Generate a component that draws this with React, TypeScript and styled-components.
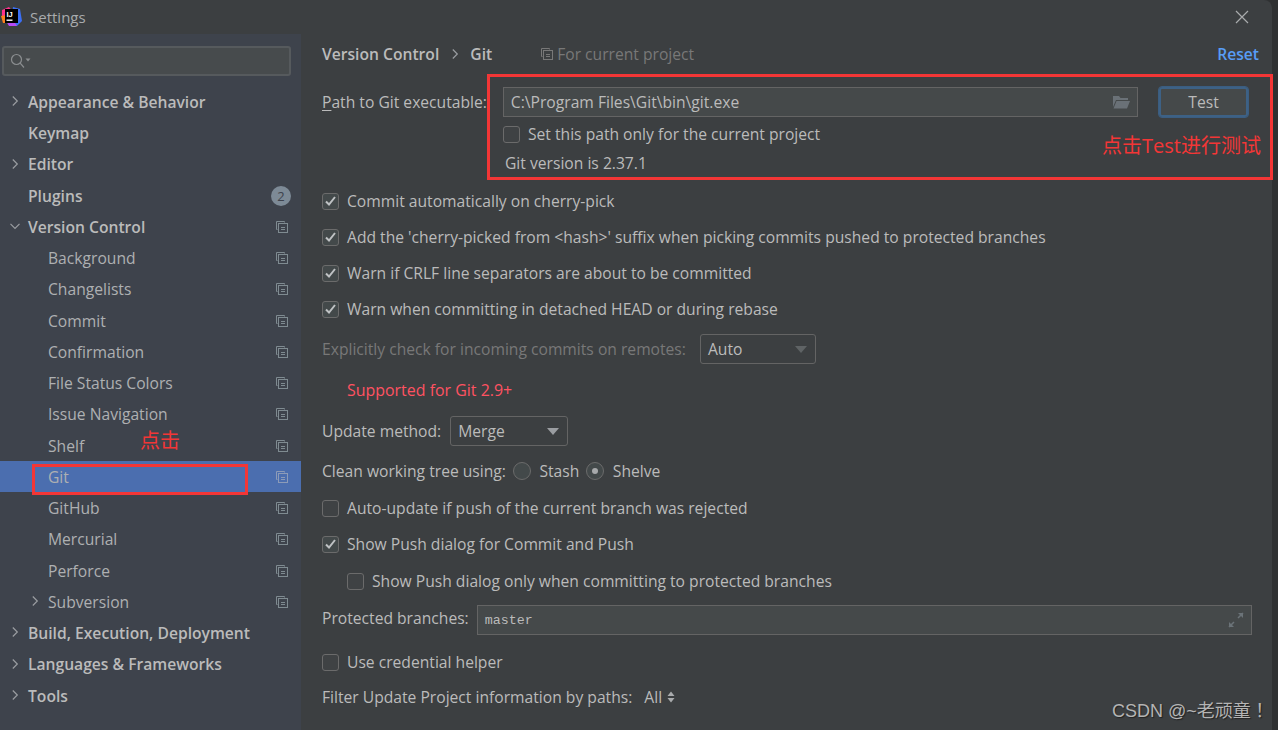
import React from "react";
import styled, { createGlobalStyle } from "styled-components";

const GlobalStyle = createGlobalStyle`
  html, body {
    margin: 0;
    padding: 0;
    background: #2f3132;
  }
  body {
    font-family: "Open Sans", "Noto Sans", "Liberation Sans", sans-serif;
    font-size: 15.65px;
    color: #bbbbbb;
    overflow: hidden;
  }
`;

//DATA
type NavItem = {
  label: string;
  level: 0 | 1;
  arrow?: "right" | "down";
  project?: boolean;
  badge?: string;
  active?: boolean;
};

const navItems: NavItem[] = [
  { label: "Appearance & Behavior", level: 0, arrow: "right" },
  { label: "Keymap", level: 0 },
  { label: "Editor", level: 0, arrow: "right" },
  { label: "Plugins", level: 0, badge: "2" },
  { label: "Version Control", level: 0, arrow: "down", project: true },
  { label: "Background", level: 1, project: true },
  { label: "Changelists", level: 1, project: true },
  { label: "Commit", level: 1, project: true },
  { label: "Confirmation", level: 1, project: true },
  { label: "File Status Colors", level: 1, project: true },
  { label: "Issue Navigation", level: 1, project: true },
  { label: "Shelf", level: 1, project: true },
  { label: "Git", level: 1, project: true, active: true },
  { label: "GitHub", level: 1, project: true },
  { label: "Mercurial", level: 1, project: true },
  { label: "Perforce", level: 1, project: true },
  { label: "Subversion", level: 1, arrow: "right", project: true },
  { label: "Build, Execution, Deployment", level: 0, arrow: "right" },
  { label: "Languages & Frameworks", level: 0, arrow: "right" },
  { label: "Tools", level: 0, arrow: "right" },
];

//ICONS
const Logo = () => (
  <svg width="22" height="22" viewBox="0 0 22 22">
    <polygon points="1,4 8,1 12,6 5,12 1,10" fill="#ff318c" />
    <polygon points="0,10 5,9 6,17 2,17" fill="#fc801d" />
    <polygon points="12,1 19,3 21,15 16,20 10,18" fill="#3b6ff5" />
    <polygon points="5,15 8,20 16,20 12,14" fill="#b74af7" />
    <rect x="4" y="3" width="13" height="14" fill="#000" />
    <rect x="5.5" y="13.5" width="6" height="1.4" fill="#fff" />
    <text x="5.5" y="10.5" fontSize="7.5" fontWeight="700" fill="#fff" fontFamily="Liberation Sans, sans-serif">
      IJ
    </text>
  </svg>
);

const Chevron = ({ down }: { down?: boolean }) => (
  <svg width="12" height="12" viewBox="0 0 12 12" fill="none" stroke="#9a9da1" strokeWidth="1.2">
    {down ? <path d="M1.5 3.8 6 8.3 10.5 3.8" /> : <path d="M3.8 1.5 8.3 6 3.8 10.5" />}
  </svg>
);

const ProjectIcon = ({ color = "#7f8b91" }: { color?: string }) => (
  <svg width="12" height="12" viewBox="0 0 12 12" fill="none" stroke={color} strokeWidth="1">
    <path d="M8.5 1.5V.5H.5v8h1" />
    <rect x="2.5" y="2.5" width="9" height="9" />
    <path d="M5 6.5h4M5 8.5h4" />
  </svg>
);

const SearchIcon = () => (
  <svg width="22" height="16" viewBox="0 0 22 16" fill="none" stroke="#8b8e90" strokeWidth="1.2">
    <circle cx="6.5" cy="6.5" r="5" />
    <path d="M10.2 10.2 14 14.5" />
    <path d="M15.5 5.5h5l-2.5 3z" fill="#8b8e90" stroke="none" />
  </svg>
);

const FolderIcon = () => (
  <svg width="18" height="14" viewBox="0 0 18 14">
    <path d="M1 1h6l1.5 2H16v2H4L1 12z" fill="#6a7177" />
    <path d="M4.5 6H18l-3 7.5H1.5z" fill="#6a7177" />
  </svg>
);

const ExpandIcon = () => (
  <svg width="16" height="16" viewBox="0 0 16 16" fill="none" stroke="#6b7378" strokeWidth="1.5">
    <path d="M10 6l5-5M1 15l5-5" />
    <path d="M10 1h5v5z" fill="#6b7378" stroke="none" />
    <path d="M1 10v5h5z" fill="#6b7378" stroke="none" />
  </svg>
);

const CheckMark = () => (
  <svg width="11" height="10" viewBox="0 0 11 10" fill="none" stroke="#bfc2c4" strokeWidth="2">
    <path d="M1 5.5 4 8.5 10 1" />
  </svg>
);

const UpDown = () => (
  <svg width="8" height="12" viewBox="0 0 8 12" fill="#a9abad">
    <path d="M4 .5 7.5 5h-7zM4 11.5.5 7h7z" />
  </svg>
);

//LAYOUT
const Frame = styled.div`
  position: relative;
  width: 1278px;
  height: 730px;
  overflow: hidden;
  background: #2f3132;
`;

const Window = styled.div`
  width: 1272px;
  height: 730px;
  background: #3c3f41;
  border-top-right-radius: 8px;
  display: flex;
  flex-direction: column;
`;

const TitleBar = styled.div`
  height: 34px;
  flex: none;
  display: flex;
  align-items: center;
  padding: 0 23px 0 1px;
  gap: 7px;
  color: #a9abad;
  font-size: 15px;
`;

const Title = styled.span`
  flex: 1;
`;

const Close = styled.svg`
  width: 14px;
  height: 14px;
  stroke: #a9abad;
  stroke-width: 1.2;
  fill: none;
`;

const Body = styled.div`
  flex: 1;
  display: flex;
  min-height: 0;
`;

const Sidebar = styled.aside`
  width: 301px;
  flex: none;
  background: #3e434c;
  padding-top: 12px;
  box-sizing: border-box;
`;

const SearchBox = styled.div`
  height: 30px;
  margin: 0 10px 0 2px;
  box-sizing: border-box;
  border: 2px solid #565a5d;
  border-radius: 3px;
  background: #474b4d;
  display: flex;
  align-items: center;
  padding-left: 6px;
`;

const NavList = styled.div`
  margin-top: 10.2px;
  display: grid;
  grid-auto-rows: 31.26px;
`;

const NavRow = styled.div<{ $level: number; $active?: boolean }>`
  position: relative;
  display: flex;
  align-items: center;
  padding-left: ${(p) => (p.$level === 1 ? 48 : 28)}px;
  padding-right: 13px;
  background: ${(p) => (p.$active ? "#4b6eaf" : "transparent")};
  color: ${(p) => (p.$level === 0 ? "#bbbbbb" : "#aeb0b2")};
  font-weight: ${(p) => (p.$level === 0 ? 600 : 400)};
`;

const NavArrow = styled.span<{ $level: number }>`
  position: absolute;
  left: ${(p) => (p.$level === 1 ? 29 : 9)}px;
  top: 9px;
  display: flex;
`;

const NavLabel = styled.span`
  flex: 1;
`;

const Badge = styled.span`
  width: 20px;
  height: 20px;
  margin-right: -3px;
  border-radius: 50%;
  background: #7d8a96;
  color: #3e434c;
  font-size: 13px;
  font-weight: 400;
  display: flex;
  align-items: center;
  justify-content: center;
`;

const Content = styled.main`
  flex: 1;
  min-width: 0;
  padding-left: 21px;
  padding-right: 20px;
`;

const Row = styled.div<{ $h: number; $mt?: number; $indent?: number; $gap?: number }>`
  height: ${(p) => p.$h}px;
  margin-top: ${(p) => p.$mt ?? 0}px;
  padding-left: ${(p) => p.$indent ?? 0}px;
  display: flex;
  align-items: center;
  gap: ${(p) => p.$gap ?? 8}px;
  white-space: nowrap;
`;

const Crumb = styled.span`
  font-weight: 600;
  color: #bbbbbb;
`;

const CrumbSep = styled.span`
  margin: 0 9px 0 10px;
  display: flex;
`;

const Scope = styled.span`
  margin-left: 49px;
  display: flex;
  align-items: center;
  gap: 4px;
  color: #787878;
  flex: 1;
`;

const Reset = styled.span`
  font-weight: 600;
  color: #589df6;
  margin-right: -7px;
`;

const Label = styled.span`
  color: #bbbbbb;
  u {
    text-underline-offset: 2px;
  }
`;

const Muted = styled.span`
  color: #787878;
`;

const Warn = styled.span`
  color: #ff5261;
  font-size: 15.95px;
`;

const TextInput = styled.div<{ $mono?: boolean }>`
  height: 30px;
  box-sizing: border-box;
  flex: 1;
  display: flex;
  align-items: center;
  justify-content: space-between;
  padding: 0 7px 0 7px;
  margin-top: ${(p) => (p.$mono ? 4 : 0)}px;
  background: #45494a;
  border: 1px solid #646464;
  color: #bbbbbb;
  font-family: ${(p) => (p.$mono ? '"Liberation Mono", monospace' : "inherit")};
  font-size: ${(p) => (p.$mono ? "13.3px" : "inherit")};
`;

const TestButton = styled.button`
  width: 91px;
  height: 32px;
  margin-left: 4px;
  margin-right: 3px;
  box-sizing: border-box;
  background: #45494a;
  border: 1px solid #3b5d80;
  border-radius: 4px;
  box-shadow: inset 0 0 0 2px #3d6185;
  color: #bbbbbb;
  font: inherit;
`;

const Box = styled.span<{ $checked?: boolean }>`
  width: 17px;
  height: 17px;
  flex: none;
  box-sizing: border-box;
  border: 1px solid #6b6b6b;
  border-radius: 3px;
  background: ${(p) => (p.$checked ? "#43494a" : "#3f4244")};
  display: flex;
  align-items: center;
  justify-content: center;
`;

const Radio = styled.span<{ $on?: boolean }>`
  width: 18px;
  height: 18px;
  flex: none;
  margin-right: 1.5px;
  box-sizing: border-box;
  border: 1px solid #6b6b6b;
  border-radius: 50%;
  background: #43494a;
  display: flex;
  align-items: center;
  justify-content: center;
  &::after {
    content: "";
    width: 6px;
    height: 6px;
    border-radius: 50%;
    background: ${(p) => (p.$on ? "#a7a9ab" : "transparent")};
  }
`;

const Select = styled.div<{ $w: number; $dim?: boolean }>`
  width: ${(p) => p.$w}px;
  height: 30px;
  box-sizing: border-box;
  border: 1px solid #646464;
  border-radius: 3px;
  padding: 0 8px 0 7px;
  display: flex;
  align-items: center;
  justify-content: space-between;
  color: #bbbbbb;
  &::after {
    content: "";
    border-left: 6px solid transparent;
    border-right: 6px solid transparent;
    border-top: 7px solid ${(p) => (p.$dim ? "#5f6365" : "#9a9da1")};
  }
`;

const VersionText = styled.span`
  margin-left: 183px;
`;

const SubOption = styled.span`
  margin-left: 181px;
  display: flex;
  align-items: center;
  gap: 8px;
`;

const FilterValue = styled.span`
  display: flex;
  align-items: center;
  gap: 5px;
  color: #bbbbbb;
`;

//ANNOTATIONS
const RedBox = styled.div<{ $x: number; $y: number; $w: number; $h: number }>`
  position: absolute;
  left: ${(p) => p.$x}px;
  top: ${(p) => p.$y}px;
  width: ${(p) => p.$w}px;
  height: ${(p) => p.$h}px;
  box-sizing: border-box;
  border: 3px solid #f33636;
`;

const Note = styled.span<{ $x: number; $y: number }>`
  position: absolute;
  left: ${(p) => p.$x}px;
  top: ${(p) => p.$y}px;
  color: #f33636;
  font-family: "Open Sans", "Noto Sans CJK SC", sans-serif;
  font-size: 20px;
  line-height: 28px;
  white-space: nowrap;
`;

const Watermark = styled.span`
  position: absolute;
  left: 1112px;
  top: 699px;
  font-family: "Liberation Sans", "Noto Sans CJK TC", sans-serif;
  font-size: 18px;
  line-height: 24px;
  color: #b4b4b4;
  text-shadow: 1px 1px 1px #222;
  white-space: nowrap;
`;

const CheckRow = ({
  h,
  mt,
  indent,
  checked,
  children,
}: {
  h: number;
  mt?: number;
  indent?: number;
  checked?: boolean;
  children: React.ReactNode;
}) => (
  <Row $h={h} $mt={mt} $indent={indent}>
    <Box $checked={checked}>{checked && <CheckMark />}</Box>
    <Label>{children}</Label>
  </Row>
);

const App: React.FC = () => {
  return (
    <Frame>
      <GlobalStyle />
      <Window>
        <TitleBar>
          <Logo />
          <Title>Settings</Title>
          <Close viewBox="0 0 14 14">
            <path d="M1 1l12 12M13 1 1 13" />
          </Close>
        </TitleBar>
        <Body>
          <Sidebar>
            <SearchBox>
              <SearchIcon />
            </SearchBox>
            <NavList>
              {navItems.map((item) => (
                <NavRow key={item.label} $level={item.level} $active={item.active}>
                  {item.arrow && (
                    <NavArrow $level={item.level}>
                      <Chevron down={item.arrow === "down"} />
                    </NavArrow>
                  )}
                  <NavLabel>{item.label}</NavLabel>
                  {item.project && <ProjectIcon color={item.active ? "#8c9bb8" : "#7f8b91"} />}
                  {item.badge && <Badge>{item.badge}</Badge>}
                </NavRow>
              ))}
            </NavList>
          </Sidebar>
          <Content>
            <Row $h={40} $gap={0}>
              <Crumb>Version Control</Crumb>
              <CrumbSep>
                <Chevron />
              </CrumbSep>
              <Crumb>Git</Crumb>
              <Scope>
                <ProjectIcon color="#787878" />
                For current project
              </Scope>
              <Reset>Reset</Reset>
            </Row>
            <Row $h={36} $mt={10} $gap={16}>
              <Label>
                <u>P</u>ath to Git executable:
              </Label>
              <TextInput>
                C:\Program Files\Git\bin\git.exe
                <FolderIcon />
              </TextInput>
              <TestButton>Test</TestButton>
            </Row>
            <Row $h={28}>
              <SubOption>
                <Box />
                <Label>Set this path only for the current project</Label>
              </SubOption>
            </Row>
            <Row $h={30}>
              <VersionText>Git version is 2.37.1</VersionText>
            </Row>
            <CheckRow h={36} mt={5} checked>
              Commit automatically on cherry-pick
            </CheckRow>
            <CheckRow h={36} checked>
              Add the 'cherry-picked from &lt;hash&gt;' suffix when picking commits pushed to protected branches
            </CheckRow>
            <CheckRow h={36} checked>
              Warn if CRLF line separators are about to be committed
            </CheckRow>
            <CheckRow h={36} checked>
              Warn when committing in detached HEAD or during rebase
            </CheckRow>
            <Row $h={40} $mt={2} $gap={14}>
              <Muted>Explicitly check for incoming commits on remotes:</Muted>
              <Select $w={116} $dim>
                Auto
              </Select>
            </Row>
            <Row $h={41} $indent={25}>
              <Warn>Supported for Git 2.9+</Warn>
            </Row>
            <Row $h={42} $gap={9}>
              <Label>Update method:</Label>
              <Select $w={118}>Merge</Select>
            </Row>
            <Row $h={38} $gap={7}>
              <Label>Clean working tree using:</Label>
              <Radio />
              <Label>Stash</Label>
              <Radio $on />
              <Label>Shelve</Label>
            </Row>
            <CheckRow h={36}>Auto-update if push of the current branch was rejected</CheckRow>
            <CheckRow h={36} checked>
              Show Push dialog for Commit and Push
            </CheckRow>
            <CheckRow h={38} indent={25}>
              Show Push dialog only when committing to protected branches
            </CheckRow>
            <Row $h={36}>
              <Label>Protected branches:</Label>
              <TextInput $mono>
                master
                <ExpandIcon />
              </TextInput>
            </Row>
            <CheckRow h={36} mt={8}>
              Use credential helper
            </CheckRow>
            <Row $h={34} $gap={12}>
              <Label>Filter Update Project information by paths:</Label>
              <FilterValue>
                All
                <UpDown />
              </FilterValue>
            </Row>
          </Content>
        </Body>
      </Window>
      <RedBox $x={487} $y={74} $w={786} $h={106} />
      <RedBox $x={32} $y={464} $w={216} $h={31} />
      <Note $x={1102} $y={132}>点击Test进行测试</Note>
      <Note $x={140} $y={427}>点击</Note>
      <Watermark>CSDN @~老顽童！</Watermark>
    </Frame>
  );
};

export default App;
